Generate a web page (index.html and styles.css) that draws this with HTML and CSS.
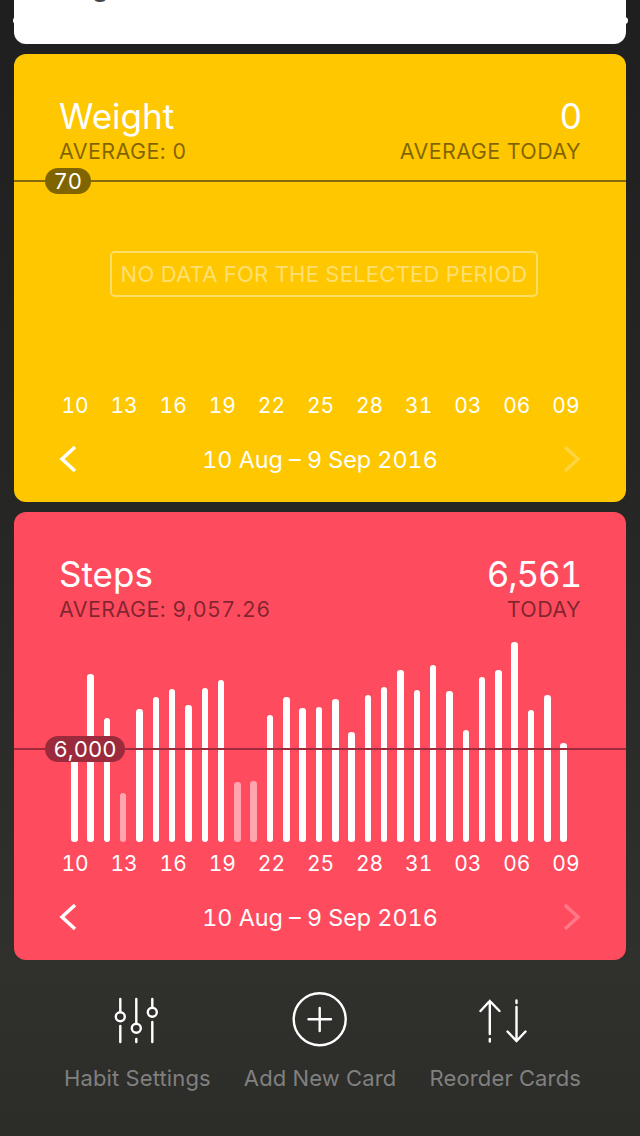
FILE: index.html
```html
<!DOCTYPE html>
<html lang="en">

<head>
    <meta charset="UTF-8">
    <meta name="viewport" content="width=device-width, initial-scale=1.0">
    <title>Habit Cards</title>

    <link rel="stylesheet" href="styles.css">
</head>

<body>
    <div class="page">
        <div class="card-top">
            <div class="top-title">Jog</div>
        </div>

        <div class="card yellow">
            <div class="card-head">
                <div class="title">Weight</div>
                <div class="title value">0</div>
                <div class="sub">AVERAGE: 0</div>
                <div class="sub">AVERAGE TODAY</div>
            </div>
            <div class="chart">
                <div class="empty">NO DATA FOR THE SELECTED PERIOD</div>
                <div class="goal goal-weight"><span class="goal-pill">70</span></div>
            </div>
            <div class="axis">
                <span>10</span><span>13</span><span>16</span><span>19</span><span>22</span><span>25</span><span>28</span><span>31</span><span>03</span><span>06</span><span>09</span>
            </div>
            <div class="pager">
                <svg class="chev" viewBox="0 0 18 28"><polyline points="16,2 3,14 16,26" /></svg>
                <span>10 Aug – 9 Sep 2016</span>
                <svg class="chev off" viewBox="0 0 18 28"><polyline points="2,2 15,14 2,26" /></svg>
            </div>
        </div>

        <div class="card red">
            <div class="card-head">
                <div class="title">Steps</div>
                <div class="title value">6,561</div>
                <div class="sub">AVERAGE: 9,057.26</div>
                <div class="sub">TODAY</div>
            </div>
            <div class="chart bars">
                <i style="height:100px"></i>
                <i style="height:168px"></i>
                <i style="height:124px"></i>
                <i class="low" style="height:49px"></i>
                <i style="height:133px"></i>
                <i style="height:145px"></i>
                <i style="height:153px"></i>
                <i style="height:137px"></i>
                <i style="height:154px"></i>
                <i style="height:162px"></i>
                <i class="low" style="height:60px"></i>
                <i class="low" style="height:61px"></i>
                <i style="height:127px"></i>
                <i style="height:145px"></i>
                <i style="height:134px"></i>
                <i style="height:135px"></i>
                <i style="height:143px"></i>
                <i style="height:110px"></i>
                <i style="height:147px"></i>
                <i style="height:155px"></i>
                <i style="height:172px"></i>
                <i style="height:152px"></i>
                <i style="height:177px"></i>
                <i style="height:151px"></i>
                <i style="height:112px"></i>
                <i style="height:165px"></i>
                <i style="height:172px"></i>
                <i style="height:200px"></i>
                <i style="height:132px"></i>
                <i style="height:147px"></i>
                <i style="height:99px"></i>
                <div class="goal goal-steps"><span class="goal-pill">6,000</span></div>
            </div>
            <div class="axis">
                <span>10</span><span>13</span><span>16</span><span>19</span><span>22</span><span>25</span><span>28</span><span>31</span><span>03</span><span>06</span><span>09</span>
            </div>
            <div class="pager">
                <svg class="chev" viewBox="0 0 18 28"><polyline points="16,2 3,14 16,26" /></svg>
                <span>10 Aug – 9 Sep 2016</span>
                <svg class="chev off" viewBox="0 0 18 28"><polyline points="2,2 15,14 2,26" /></svg>
            </div>
        </div>

        <div class="toolbar">
            <div class="tool">
                <svg class="tool-icon" viewBox="0 0 60 56">
                    <path d="M13.3 8V20M13.3 35V51M29.3 8V32M29.3 48V51M45.3 8V16M45.3 31V51" />
                    <circle cx="13.3" cy="25.7" r="4.5" />
                    <circle cx="29.3" cy="37.3" r="4.5" />
                    <circle cx="45.3" cy="21.3" r="4.5" />
                </svg>
                <span>Habit Settings</span>
            </div>
            <div class="tool">
                <svg class="tool-icon" viewBox="0 0 60 56">
                    <circle cx="29.7" cy="28.3" r="26" />
                    <path d="M18.5 28.3H41M29.7 17V40" />
                </svg>
                <span>Add New Card</span>
            </div>
            <div class="tool">
                <svg class="tool-icon" viewBox="0 0 60 56">
                    <path d="M14.8 10V43M14.8 48V50.5M5.5 20L14.8 10L24.5 20" />
                    <path d="M41.5 9.5V12M41.5 16V50M32.5 40.5L41.5 50L50.5 40.5" />
                </svg>
                <span>Reorder Cards</span>
            </div>
        </div>
    </div>
</body>

</html>
```

FILE: styles.css
```css
* {
    margin: 0;
    padding: 0;
    box-sizing: border-box;
}

body {
    background: linear-gradient(#1f1f1f, #262625 45%, #30302c 85%, #2c2c28);
    height: 1136px;
    overflow: hidden;
    font-family: Inter, "Noto Sans", sans-serif;
    font-variant-numeric: tabular-nums;
    color: #fff;
}

.page {
    display: flex;
    flex-direction: column;
    gap: 10px;
    padding: 0 14px;
}

.card-top {
    position: relative;
    height: 44px;
    background: #fff;
    border-radius: 0 0 12px 12px;
    display: flex;
    flex-direction: column;
    justify-content: flex-end;
    padding: 0 45px 38px;
}

/* small bumps that poke out either side of the card */
.card-top::after {
    content: "";
    position: absolute;
    top: 17px;
    left: -1px;
    right: -2px;
    height: 7px;
    background: #fff;
    border-radius: 4px;
}

.top-title {
    color: #444;
    font-size: 28px;
    line-height: 40px;
}

.card {
    height: 448px;
    border-radius: 12px;
    display: flex;
    flex-direction: column;
}

.yellow {
    background: #ffc700;
}

.red {
    background: #ff4b5e;
}

.card-head {
    display: grid;
    grid-template-columns: 1fr auto;
    padding: 40px 45px 0;
}

.card-head>div:nth-child(even) {
    text-align: right;
}

.title {
    font-size: 35px;
    line-height: 44px;
}

.value {
    letter-spacing: -1.2px;
}

.sub {
    font-size: 21.5px;
    line-height: 26px;
    letter-spacing: 0.4px;
    color: rgba(0, 0, 0, 0.5);
}

.chart {
    position: relative;
    height: 220px;
    display: flex;
    align-items: center;
    justify-content: center;
}

.empty {
    height: 46px;
    width: 428px;
    margin-left: 8px;
    border: 2px solid rgba(255, 255, 255, 0.4);
    border-radius: 5px;
    color: rgba(255, 255, 255, 0.45);
    font-size: 22px;
    letter-spacing: 0.25px;
    line-height: 42px;
    text-align: center;
    white-space: nowrap;
}

.bars {
    align-items: flex-end;
    justify-content: space-between;
    padding: 0 59px 0 57px;
}

.bars>i {
    display: block;
    width: 6.5px;
    background: #fff;
    border-radius: 3.25px;
}

.bars>i.low {
    opacity: 0.5;
}

.goal {
    position: absolute;
    left: 0;
    right: 0;
    height: 2px;
}

.goal-weight {
    top: 16px;
    background: #86690a;
}

.goal-steps {
    top: 126px;
    background: #a02a3c;
}

.goal-pill {
    position: absolute;
    left: 31px;
    top: -12px;
    height: 26px;
    padding: 0 8.5px;
    border-radius: 13px;
    font-size: 22px;
    line-height: 26px;
}

.goal-weight .goal-pill {
    background: #806400;
}

.goal-steps .goal-pill {
    background: #9a2a3c;
}

.axis {
    height: 42px;
    display: grid;
    grid-template-columns: repeat(11, 1fr);
    padding: 0 35.5px 0 36.5px;
    align-items: center;
    text-align: center;
    font-size: 21px;
}

.pager {
    height: 66px;
    margin-bottom: 10px;
    padding: 0 45px;
    display: flex;
    align-items: center;
    justify-content: space-between;
    font-size: 23.3px;
}

.chev {
    width: 18px;
    height: 28px;
    fill: none;
    stroke: #fff;
    stroke-width: 3.5;
}

.chev.off {
    opacity: 0.25;
}

.toolbar {
    display: flex;
    justify-content: center;
    gap: 33px;
    padding: 21px 0 0 5px;
    color: #808080;
    font-size: 22px;
    letter-spacing: 0.15px;
    line-height: 26px;
}

.tool {
    display: flex;
    flex-direction: column;
    align-items: center;
    gap: 18px;
}

.tool-icon {
    width: 60px;
    height: 56px;
    fill: none;
    stroke: #fff;
    stroke-width: 2.4;
    stroke-linecap: round;
}
```
